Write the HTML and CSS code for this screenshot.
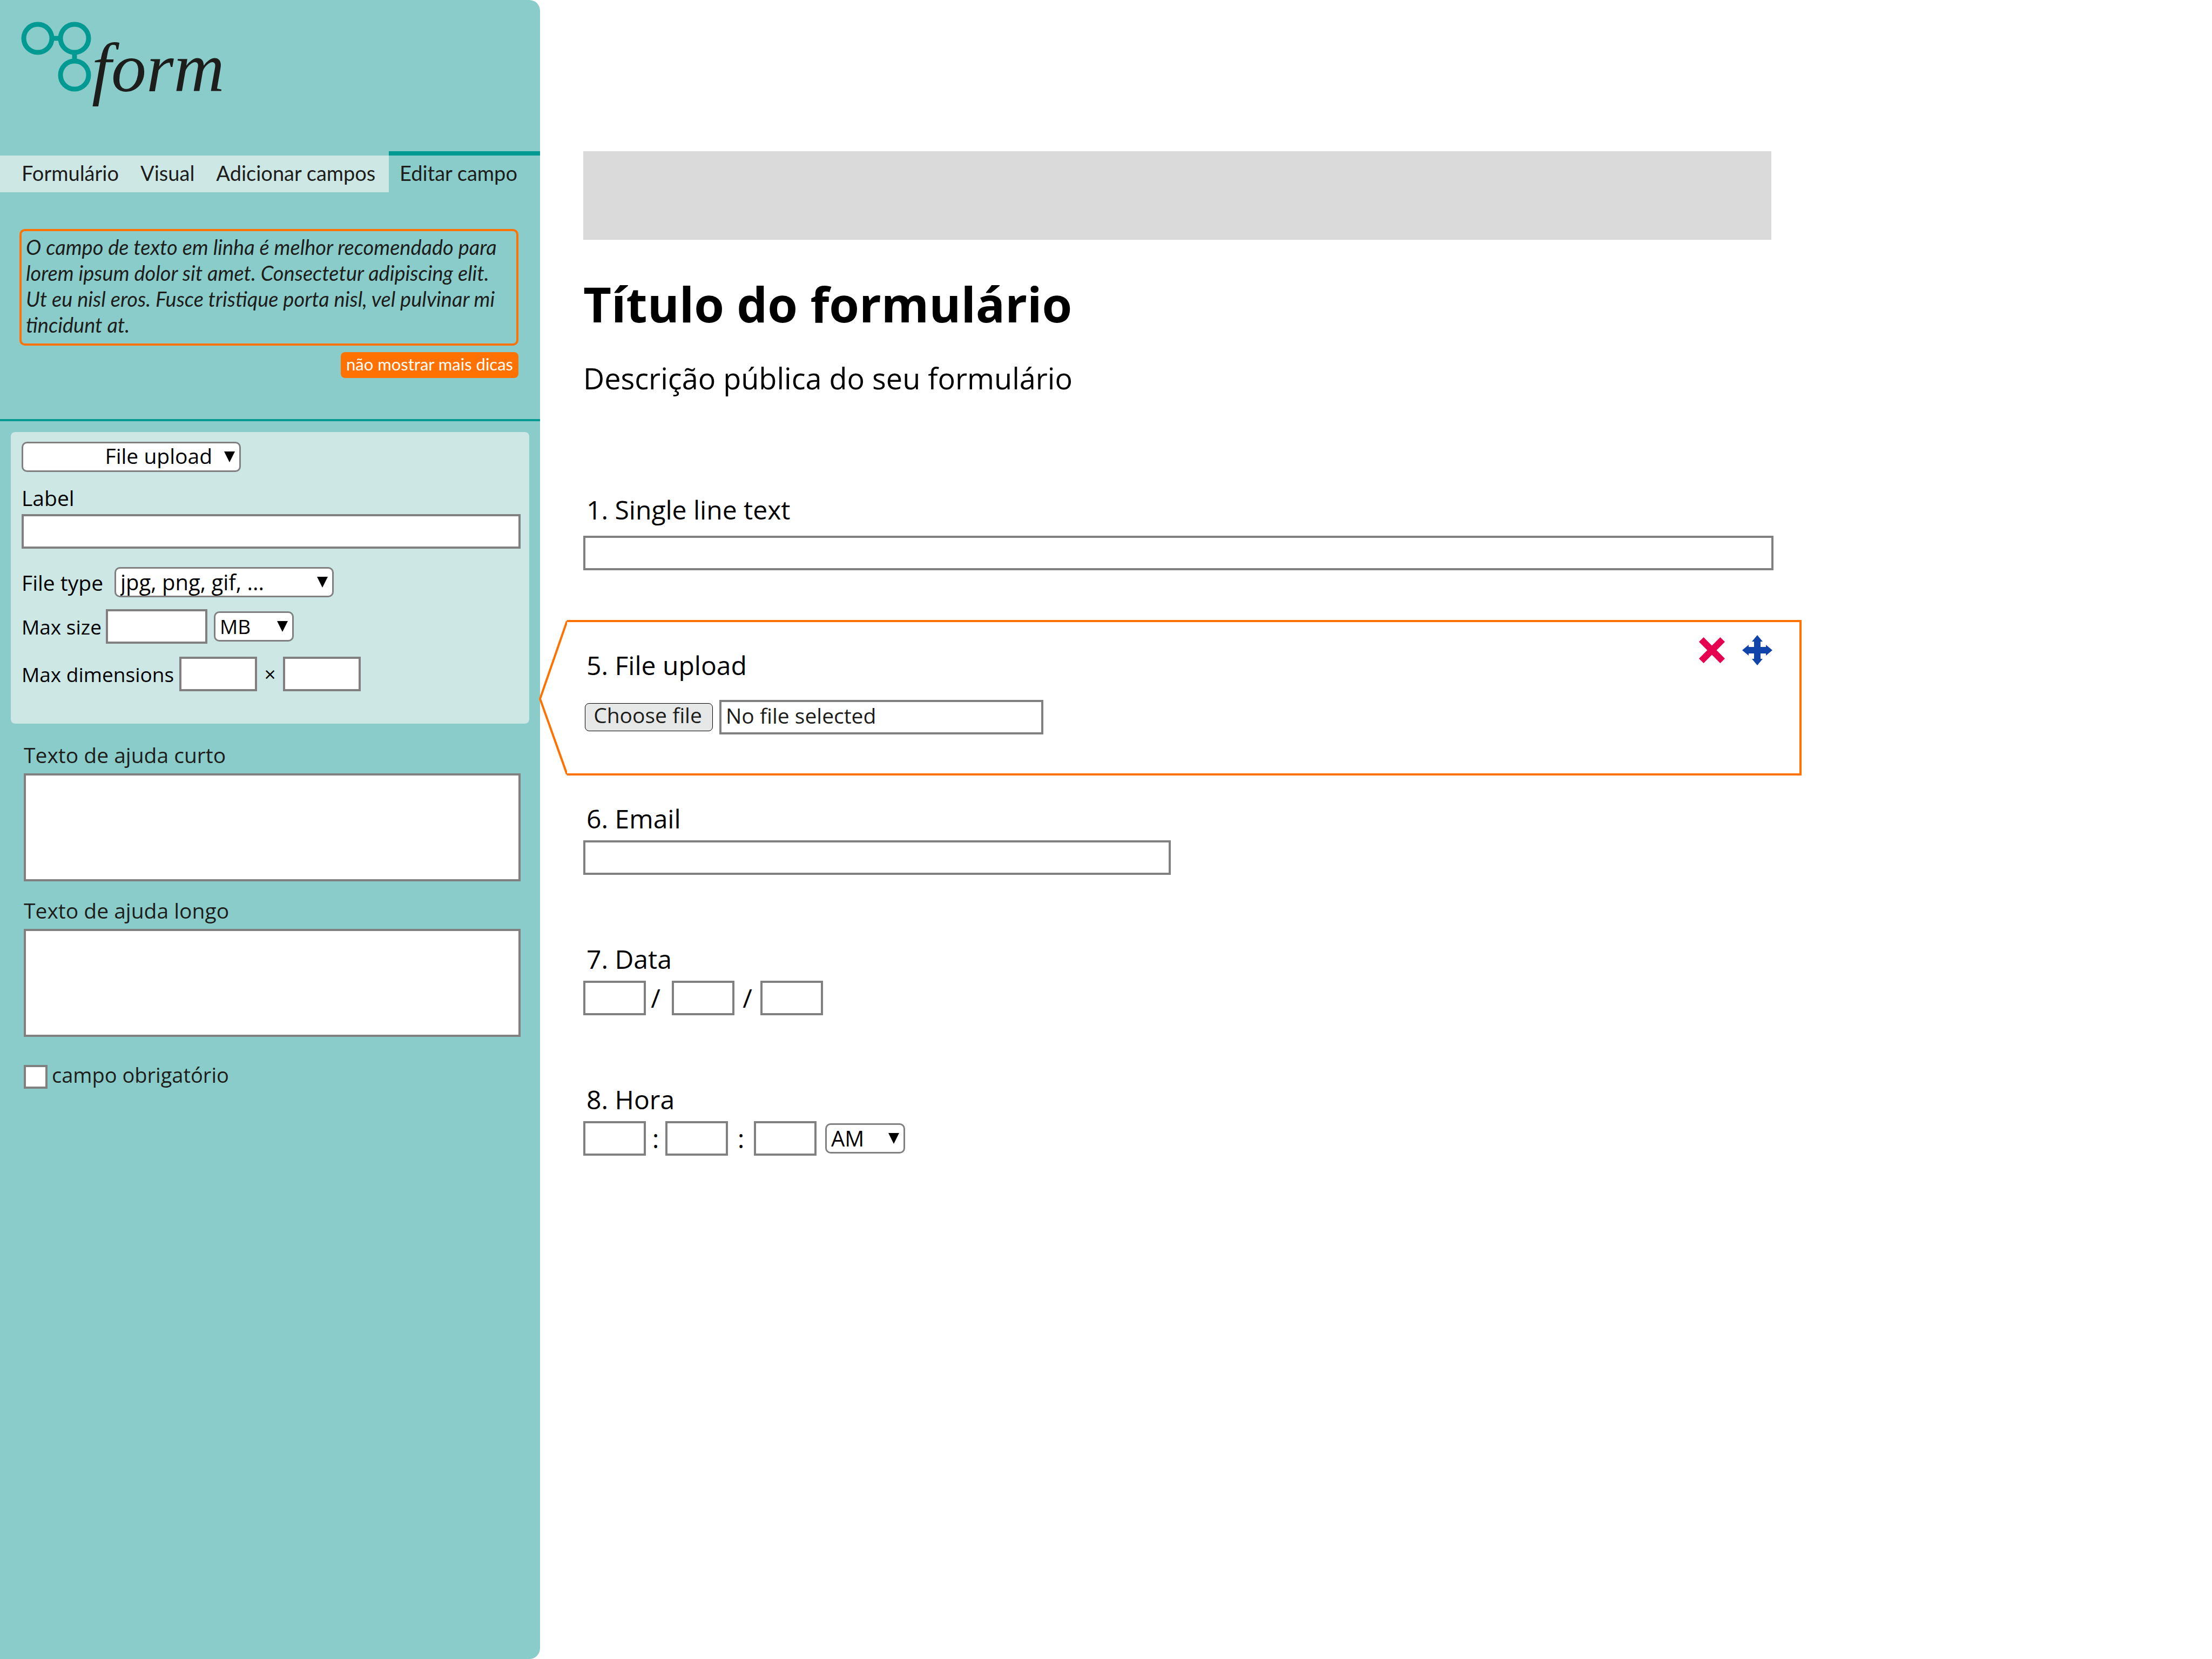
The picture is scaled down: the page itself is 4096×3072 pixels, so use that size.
FILE: index.html
```html
<!DOCTYPE html>
<html lang="pt-BR">
<head>
<meta charset="utf-8">
<meta name="viewport" content="width=device-width, initial-scale=1">
<title>form</title>
<link rel="stylesheet" href="styles.css">
</head>
<body>
<div class="app">
  <aside class="sidebar">
    <header class="brand">
      <svg class="logo" viewBox="0 0 400 180" role="img" aria-label="form">
        <g class="logo-rings">
          <circle cx="30" cy="30" r="26"/>
          <circle cx="98" cy="30" r="26"/>
          <circle cx="98" cy="98" r="26"/>
          <path d="M56 30h16M98 56v16"/>
        </g>
        <text class="logo-word" x="130" y="128">form</text>
      </svg>
    </header>

    <nav class="tabs">
      <div class="tabs-rest">
        <a href="#formulario">Formulário</a>
        <a href="#visual">Visual</a>
        <a href="#adicionar">Adicionar campos</a>
      </div>
      <a class="tab-active" href="#editar" aria-current="page">Editar campo</a>
    </nav>

    <section class="hint">
      <p class="hint-text">O campo de texto em linha é melhor recomendado para lorem ipsum dolor sit amet. Consectetur adipiscing elit. Ut eu nisl eros. Fusce tristique porta nisl, vel pulvinar mi tincidunt at.</p>
      <button class="hint-dismiss" type="button">não mostrar mais dicas</button>
    </section>

    <form class="editor">
      <div class="panel">
        <div class="select select-wide select-end">
          <select aria-label="Tipo de campo"><option>File upload</option></select>
        </div>
        <label class="panel-label" for="f-label">Label</label>
        <input class="box" id="f-label" type="text">
        <div class="row row-type">
          <label class="label-type" for="f-type">File type</label>
          <div class="select select-wide select-large">
            <select id="f-type"><option>jpg, png, gif, ...</option></select>
          </div>
        </div>
        <div class="row row-size">
          <label class="label-size" for="f-size">Max size</label>
          <input class="box box-size" id="f-size" type="text">
          <div class="select select-unit">
            <select aria-label="Unidade"><option>MB</option></select>
          </div>
        </div>
        <div class="row row-dimensions">
          <label class="label-dimensions" for="f-width">Max dimensions</label>
          <input class="box box-dimension" id="f-width" type="text">
          <span class="sep-wide">×</span>
          <input class="box box-dimension" type="text" aria-label="Max height">
        </div>
      </div>

      <div class="help">
        <label for="f-short">Texto de ajuda curto</label>
        <textarea class="box area" id="f-short"></textarea>
        <label for="f-long">Texto de ajuda longo</label>
        <textarea class="box area" id="f-long"></textarea>
        <div class="required">
          <input class="tick" id="f-required" type="checkbox">
          <label for="f-required">campo obrigatório</label>
        </div>
      </div>
    </form>
  </aside>

  <main class="preview">
    <div class="banner"></div>
    <h1>Título do formulário</h1>
    <p class="description">Descrição pública do seu formulário</p>

    <form>
      <div class="field field-first">
        <label for="q1">1. Single line text</label>
        <input class="box" id="q1" type="text">
      </div>

      <div class="selected">
        <svg class="pointer" viewBox="0 0 52 288" preserveAspectRatio="none" aria-hidden="true">
          <path d="M52 2 2 146 52 286"/>
        </svg>
        <div>
          <label for="q5">5. File upload</label>
          <div class="file">
            <button class="choose" type="button">Choose file</button>
            <input class="box file-name" id="q5" type="text" value="No file selected" readonly>
          </div>
        </div>
        <div class="actions">
          <button type="button" aria-label="Remover">
            <svg viewBox="-4 -4 56 56"><path fill="#e60050" d="M8.6 0 24 15.4 39.4 0 48 8.6 32.6 24 48 39.4 39.4 48 24 32.6 8.6 48 0 39.4 15.4 24 0 8.6z"/></svg>
          </button>
          <button type="button" aria-label="Mover">
            <svg viewBox="0 0 56 56"><path fill="#1144ab" d="M28 0 38 12H34V22H44V18L56 28 44 38V34H34V44H38L28 56 18 44H22V34H12V38L0 28 12 18V22H22V12H18z"/></svg>
          </button>
        </div>
      </div>

      <div class="field field-email">
        <label for="q6">6. Email</label>
        <input class="box box-half" id="q6" type="text">
      </div>

      <div class="field">
        <label for="q7">7. Data</label>
        <div class="row">
          <input class="box box-part" id="q7" type="text">
          <span class="sep sep-slash">/</span>
          <input class="box box-part" type="text" aria-label="Mês">
          <span class="sep-wide">/</span>
          <input class="box box-part" type="text" aria-label="Ano">
        </div>
      </div>

      <div class="field">
        <label for="q8">8. Hora</label>
        <div class="row">
          <input class="box box-part" id="q8" type="text">
          <span class="sep">:</span>
          <input class="box box-part" type="text" aria-label="Minutos">
          <span class="sep-wide">:</span>
          <input class="box box-part" type="text" aria-label="Segundos">
          <div class="select select-unit select-large select-period">
            <select aria-label="Período"><option>AM</option></select>
          </div>
        </div>
      </div>
    </form>
  </main>
</div>
</body>
</html>
```
FILE: styles.css
```css
* { box-sizing: border-box; }

body {
  margin: 0;
  background: #fff;
  color: #000;
  font-family: "Open Sans", "Trebuchet MS", sans-serif;
  font-size: 39px;
}

h1, p { margin: 0; }

button, input, select, textarea {
  margin: 0;
  font: inherit;
  color: inherit;
}

.app {
  display: flex;
  min-height: 100vh;
}

/* Sidebar */

.sidebar {
  flex: 0 0 1000px;
  background: #8accca;
  border-radius: 0 20px 20px 0;
  color: #1d1d1b;
}

.brand {
  height: 280px;
  padding: 41px 0 0 40px;
}

.logo {
  display: block;
  width: 400px;
  height: 180px;
  overflow: visible;
}

.logo-rings {
  fill: none;
  stroke: #009a93;
  stroke-width: 9;
}

.logo-word {
  font: italic 130px "Liberation Serif", serif;
  fill: #1d1d1b;
}

.tabs {
  display: flex;
  align-items: flex-end;
  font-family: Lato, sans-serif;
  font-size: 38px;
  line-height: 64px;
}

.tabs a {
  color: inherit;
  text-decoration: none;
  white-space: nowrap;
}

.tabs-rest {
  flex: 1;
  display: flex;
  gap: 40px;
  padding: 0 0 4px 40px;
  background: #cde7e5;
}

.tab-active {
  flex: 0 0 280px;
  padding: 0 0 4px 20px;
  border-top: 8px solid #009a93;
}

.hint {
  display: flex;
  flex-direction: column;
  align-items: flex-end;
  gap: 12px;
  padding: 68px 40px 76px 36px;
  border-bottom: 4px solid #009a93;
  font-family: Lato, sans-serif;
}

.hint-text {
  padding: 5px 16px 11px 8px;
  border: 4px solid #ff7100;
  border-radius: 10px;
  font-size: 38px;
  font-style: italic;
  line-height: 48px;
}

.hint-dismiss {
  height: 48px;
  padding: 0 10px 4px;
  border: 0;
  border-radius: 8px;
  background: #ff7100;
  color: #fff;
  font-size: 31px;
  line-height: 44px;
}

.panel {
  display: flex;
  flex-direction: column;
  margin: 20px 20px 0;
  padding: 18px 16px 60px 20px;
  border-radius: 8px;
  background: #cde7e5;
  color: #000;
}

.panel-label {
  margin: 22px 0 4px;
  line-height: 52px;
}

.row {
  display: flex;
  align-items: center;
}

.row-type { margin-top: 34px; }
.row-size { margin-top: 22px; font-size: 37px; }
.row-dimensions { margin-top: 24px; font-size: 37px; }

.label-type { flex: 0 0 172px; }
.label-size { flex: 0 0 156px; }
.label-dimensions { flex: 0 0 292px; }

/* Controls */

.box {
  display: block;
  width: 100%;
  height: 64px;
  padding: 0 10px;
  border: 4px solid #808080;
  border-radius: 0;
  background: #fff;
  outline: 0;
}

.box-size { width: 188px; margin-right: 12px; }
.box-dimension { width: 144px; }
.box-part { width: 116px; }
.box-half { width: 1088px; }

.area {
  height: 200px;
  resize: none;
}

.select { position: relative; }
.select-wide { width: 406px; }
.select-unit { width: 148px; }

.select select {
  display: block;
  width: 100%;
  height: 56px;
  padding: 0 40px 0 8px;
  border: 3px solid #808080;
  border-radius: 10px;
  background: #fff;
  line-height: 50px;
  appearance: none;
}

.select::after {
  content: "";
  position: absolute;
  top: 18px;
  right: 11px;
  width: 20px;
  height: 20px;
  background: #000;
  clip-path: polygon(0 0, 100% 0, 50% 100%);
  pointer-events: none;
}

.select-end select {
  padding-right: 50px;
  padding-bottom: 4px;
  line-height: 46px;
  text-align-last: right;
}

.select-large { font-size: 40px; }
.select-period { margin-left: 16px; }

.sep, .sep-wide {
  flex: none;
  width: 36px;
  line-height: 60px;
  text-align: center;
}

.sep-wide { width: 48px; }
.sep-slash { margin-right: 12px; }

/* Help texts */

.help {
  display: flex;
  flex-direction: column;
  padding: 32px 36px 60px 44px;
  line-height: 52px;
}

.area { margin: 8px 0 28px; }

.required {
  display: flex;
  gap: 8px;
  margin-top: 24px;
  font-size: 38px;
  line-height: 36px;
}

.tick {
  width: 44px;
  height: 44px;
  border: 4px solid #808080;
  background: #fff;
  appearance: none;
}

/* Form preview */

.preview {
  flex: 1;
  max-width: 2284px;
  padding: 280px 0 80px 80px;
}

.banner {
  height: 164px;
  margin-right: 4px;
  background: #dadada;
}

h1 {
  margin-top: 66px;
  font-size: 90px;
  font-weight: 700;
  line-height: 104px;
}

.description {
  margin-top: 50px;
  font-size: 54px;
  line-height: 72px;
}

.field { margin-top: 126px; }
.field-first { margin-top: 178px; }
.field-email { margin-top: 50px; }

.preview label {
  display: block;
  padding-left: 6px;
  font-size: 48px;
  line-height: 60px;
}

.field label { margin-bottom: 10px; }
.field-first label { margin-bottom: 18px; }
.field .sep, .field .sep-wide { font-size: 48px; }

.selected {
  position: relative;
  display: flex;
  justify-content: space-between;
  margin: 92px -52px 0 -30px;
  padding: 50px 50px 72px 30px;
  border: 4px solid #ff7100;
  border-left: 0;
}

.pointer {
  position: absolute;
  top: -4px;
  right: 100%;
  width: 52px;
  height: calc(100% + 8px);
  fill: #fff;
  stroke: #ff7100;
  stroke-width: 4;
}

.file {
  display: flex;
  align-items: center;
  gap: 12px;
  margin-top: 34px;
  padding-left: 3px;
  color: #1d1d1b;
}

.choose {
  width: 237px;
  height: 52px;
  padding: 0 4px 8px 0;
  border: 1px solid #000;
  border-radius: 8px;
  background: #e6e8e7;
  line-height: 42px;
  white-space: nowrap;
}

.file-name {
  width: 600px;
  padding: 0 8px 8px;
}

.actions {
  display: flex;
  align-items: flex-start;
  gap: 28px;
  margin-top: -26px;
}

.actions button {
  width: 56px;
  height: 56px;
  padding: 0;
  border: 0;
  background: none;
}

.actions svg { display: block; }
```
